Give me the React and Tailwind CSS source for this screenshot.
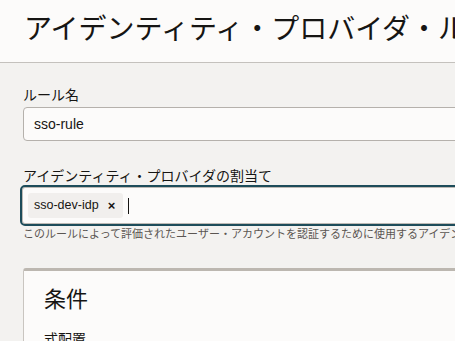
import React from 'react';

const jp = { fontFamily: '"Liberation Sans", "Noto Sans CJK JP", sans-serif' };

export default function App() {
  return (
    <div className="w-[455px] h-[341px] overflow-hidden bg-[#f3f2f0] text-[#161513]" style={jp}>
      {/* Header */}
      <div className="h-[63px] bg-[#fcfbfa] border-b border-[#c4c1bd] flex items-center pl-[24px] overflow-hidden">
        <h1 className="text-[28px] leading-none whitespace-nowrap font-normal -mt-[2px]">
          アイデンティティ・プロバイダ・ルールの作成
        </h1>
      </div>

      {/* Form */}
      <div className="pl-[23px] pt-[23px]">
        <label className="block text-[14px] leading-[18px] mb-[3px]">ルール名</label>
        <div className="h-[34px] w-[460px] bg-[#fcfbfa] border border-[#b5b1ac] rounded-[4px] flex items-center pl-[10px] text-[14px]">
          sso-rule
        </div>

        <label className="block text-[14px] leading-[18px] mt-[26px] mb-[0px] whitespace-nowrap">
          アイデンティティ・プロバイダの割当て
        </label>
        <div className="-ml-[3px] h-[41px] w-[470px] bg-[#fcfbfa] border-2 border-[#1d4c5a] rounded-[5px] shadow-[inset_0_0_0_1px_#bdb9b4] flex items-center pl-[6px] gap-[5px]">
          <span className="h-[25px] bg-[#f1efed] rounded-[3px] flex items-center pl-[6px] pr-[8px] text-[12.5px] gap-[9px]">
            sso-dev-idp
            <span className="font-bold text-[13px] leading-none">×</span>
          </span>
          <span className="w-px h-[16px] bg-[#161513]" />
        </div>
        <p className="text-[11px] leading-[14px] mt-[1px] text-[#5b5652] whitespace-nowrap">
          このルールによって評価されたユーザー・アカウントを認証するために使用するアイデンティティ・プロバイダを選択します。
        </p>

        {/* Card */}
        <div className="mt-[27px] w-[460px] h-[120px] bg-[#fcfbfa] border-l border-[#c9c5c0] border-t-[3px] border-t-[#bcb7b0] rounded-tl-[3px] pl-[20px] pt-[16px]">
          <h2 className="text-[22px] leading-[26px] font-normal">条件</h2>
          <div className="text-[14px] leading-[18px] mt-[17px]">式配置</div>
        </div>
      </div>
    </div>
  );
}
